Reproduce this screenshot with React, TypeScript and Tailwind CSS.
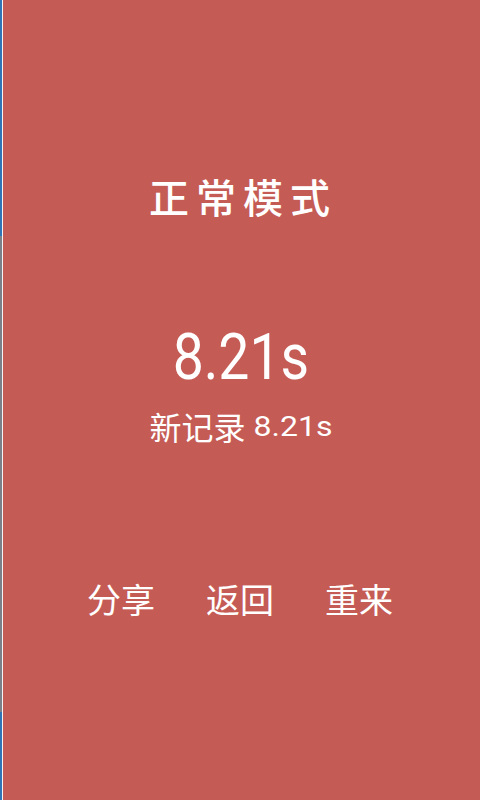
const cjk = "font-['Noto_Sans_CJK_SC',sans-serif]";

export default function App() {
  return (
    <div className="relative flex h-[800px] w-[480px] flex-col items-center bg-[#c55b55] text-white">
      <div className="absolute inset-y-0 left-0 flex w-[3px]">
        <div className="flex w-[2px] flex-col">
          <div className="h-[236px] bg-[#2f74b5]" />
          <div className="flex-1 bg-[#7a7f88]" />
          <div className="h-[88px] bg-[#2f74b5]" />
        </div>
        <div className="w-[1px] bg-[#f4f4f4]" />
      </div>
      <h1 className={`mt-[166px] ml-[6px] text-[40px] leading-[60px] tracking-[7px] font-medium ${cjk}`}>正常模式</h1>
      <div className="mt-[94px] ml-[2px] scale-x-[0.865] font-['Roboto',sans-serif] text-[64px] leading-[76px]">8.21s</div>
      <div className={`mt-[8px] ml-[2px] flex items-center gap-[8px] text-[32px] leading-[44px] ${cjk}`}>
        <span>新记录</span>
        <span className="scale-y-[0.88] font-['Roboto',sans-serif]">8.21s</span>
      </div>
      <div className={`mt-[126px] flex gap-[51px] text-[34px] leading-[50px] ${cjk}`}>
        <span>分享</span>
        <span>返回</span>
        <span>重来</span>
      </div>
    </div>
  );
}
